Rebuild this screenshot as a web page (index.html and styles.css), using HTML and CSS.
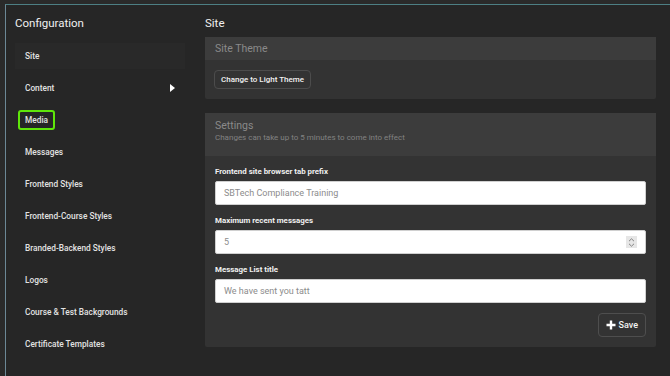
FILE: index.html
```html
<!DOCTYPE html>
<html>
<head>
<meta charset="utf-8">
<link rel="stylesheet" href="styles.css">
</head>
<body>
<div class="frame">
  <aside class="sidebar">
    <h1 class="title">Configuration</h1>
    <nav class="nav">
      <div class="nav-item active">Site</div>
      <div class="nav-item has-sub">Content<span class="caret"></span></div>
      <div class="nav-item"><span class="focus">Media</span></div>
      <div class="nav-item">Messages</div>
      <div class="nav-item">Frontend Styles</div>
      <div class="nav-item">Frontend-Course Styles</div>
      <div class="nav-item">Branded-Backend Styles</div>
      <div class="nav-item">Logos</div>
      <div class="nav-item">Course &amp; Test Backgrounds</div>
      <div class="nav-item">Certificate Templates</div>
    </nav>
  </aside>
  <main class="main">
    <h1 class="title">Site</h1>
    <section class="card">
      <div class="card-head"><div class="card-title">Site Theme</div></div>
      <div class="card-body">
        <button class="btn">Change to Light Theme</button>
      </div>
    </section>
    <section class="card">
      <div class="card-head tall">
        <div class="card-title">Settings</div>
        <div class="card-sub">Changes can take up to 5 minutes to come into effect</div>
      </div>
      <div class="card-body form">
        <label class="label">Frontend site browser tab prefix</label>
        <div class="input">SBTech Compliance Training</div>
        <label class="label">Maximum recent messages</label>
        <div class="input number">5
          <span class="spin"><svg width="9" height="11" viewBox="0 0 9 11"><path d="M2 4.2L4.5 1.8L7 4.2M2 6.8L4.5 9.2L7 6.8" fill="none" stroke="#777" stroke-width="0.9"/></svg></span>
        </div>
        <label class="label">Message List title</label>
        <div class="input">We have sent you tatt</div>
        <div class="actions">
          <button class="btn save"><svg width="10" height="10" viewBox="0 0 10 10"><path d="M5 0.5V9.5M0.5 5H9.5" stroke="#fff" stroke-width="2.4"/></svg>Save</button>
        </div>
      </div>
    </section>
  </main>
</div>
</body>
</html>
```

FILE: styles.css
```css
* { box-sizing: border-box; }
html, body { margin: 0; height: 100%; }
body {
  background: #2a2a2a;
  font-family: Roboto, "Noto Sans", "Liberation Sans", sans-serif;
  color: #e6e6e6;
  overflow: hidden;
}
.frame {
  margin-top: 4px;
  margin-left: 5px;
  height: 372px;
  border-top: 1px solid #4d7f84;
  border-left: 1px solid #6c8896;
  background: #262626;
  display: flex;
}
.title {
  margin: 0;
  font-size: 11.5px;
  font-weight: 400;
  color: #f0f0f0;
  height: 14px;
  line-height: 14px;
}
.sidebar {
  width: 190px;
  padding: 11px 0 0 9px;
}
.nav {
  margin-top: 13px;
  width: 170px;
  display: flex;
  flex-direction: column;
  gap: 6px;
}
.nav-item {
  height: 26px;
  flex: none;
  display: flex;
  align-items: center;
  padding-left: 10px;
  font-size: 8.3px;
  font-weight: 500;
  color: #e2e2e2;
  position: relative;
}
.nav-item.active { background: #292929; }
.caret {
  position: absolute;
  right: 10px;
  top: 9px;
  width: 0; height: 0;
  border-top: 4px solid transparent;
  border-bottom: 4px solid transparent;
  border-left: 5px solid #ffffff;
}
.focus {
  margin-left: -7px;
  border: 2px solid #5fe60a;
  border-radius: 3px;
  padding: 3px 5px;
  line-height: 10px;
}
.main {
  flex: 1;
  padding: 11px 14px 0 9px;
}
.card {
  margin-top: 7px;
  background: #333333;
  border-radius: 2px;
}
.card + .card { margin-top: 14px; }
.card-head {
  background: #3c3c3c;
  height: 23px;
  padding: 5px 10px 0;
}
.card-head.tall { height: 43px; padding-top: 6px; }
.card-title {
  font-size: 10.5px;
  color: #8a8a8a;
  line-height: 13px;
}
.card-sub {
  font-size: 8px;
  color: #828282;
  line-height: 11px;
}
.card-body { padding: 10px 9px; display: flex; }
.btn {
  font-family: inherit;
  background: transparent;
  border: 1px solid #4c4c4c;
  border-radius: 4px;
  color: #f2f2f2;
  font-size: 8px;
  font-weight: 500;
  height: 19px;
  padding: 0 6px;
  display: inline-flex;
  align-items: center;
}
.form { padding: 10px 10px 10px; flex-direction: column; }
.label {
  font-size: 7.9px;
  font-weight: 700;
  color: #f0f0f0;
  line-height: 12px;
  margin-bottom: 3px;
}
.input {
  height: 24px;
  background: #ffffff;
  border: 1px solid #d0d0d0;
  border-radius: 2px;
  padding-left: 8px;
  font-size: 9px;
  color: #8c8c8c;
  display: flex;
  align-items: center;
  margin-bottom: 10px;
}
.input.number { justify-content: space-between; padding-right: 8px; }
.spin {
  width: 11px;
  height: 12px;
  background: #e6e6e6;
  display: flex;
  align-items: center;
  justify-content: center;
}
.actions {
  display: flex;
  justify-content: flex-end;
}
.btn.save {
  height: 24px;
  padding: 0 7px 0 7px;
  font-size: 9px;
  gap: 3px;
  border-color: #4e4e4e;
}
```
